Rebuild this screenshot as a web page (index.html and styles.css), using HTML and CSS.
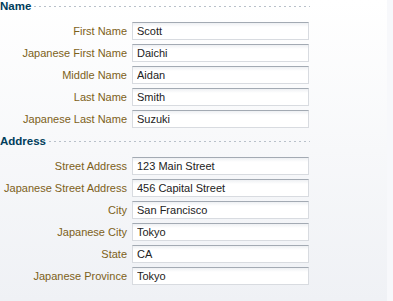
FILE: index.html
```html
<!DOCTYPE html>
<html lang="en">
<head>
	<meta charset="UTF-8">
	<title>Person Form</title>
	<link rel="stylesheet" href="styles.css">
</head>
<body>
<div class="panel">
	<div class="section">
		<h2 class="hdr"><span>Name</span></h2>
		<div class="rows">
			<div class="row"><label>First Name</label><input type="text" value="Scott"></div>
			<div class="row"><label>Japanese First Name</label><input type="text" value="Daichi"></div>
			<div class="row"><label>Middle Name</label><input type="text" value="Aidan"></div>
			<div class="row"><label>Last Name</label><input type="text" value="Smith"></div>
			<div class="row"><label>Japanese Last Name</label><input type="text" value="Suzuki"></div>
		</div>
	</div>
	<div class="section">
		<h2 class="hdr"><span>Address</span></h2>
		<div class="rows">
			<div class="row"><label>Street Address</label><input type="text" value="123 Main Street"></div>
			<div class="row"><label>Japanese Street Address</label><input type="text" value="456 Capital Street"></div>
			<div class="row"><label>City</label><input type="text" value="San Francisco"></div>
			<div class="row"><label>Japanese City</label><input type="text" value="Tokyo"></div>
			<div class="row"><label>State</label><input type="text" value="CA"></div>
			<div class="row"><label>Japanese Province</label><input type="text" value="Tokyo"></div>
		</div>
	</div>
</div>
</body>
</html>
```

FILE: styles.css
```css
html, body {
  margin: 0;
  height: 100%;
}
body {
  background: #f7f8fb;
  font-family: "Liberation Sans", Arial, sans-serif;
  font-size: 11px;
}
.panel {
  width: 387px;
  height: 301px;
  background: linear-gradient(#ffffff, #eff1f5);
  box-sizing: border-box;
}
.section {
  margin-bottom: 7px;
}
.hdr {
  display: flex;
  align-items: center;
  gap: 3px;
  width: 310px;
  height: 12px;
  margin: 0 0 10px 0;
  font-size: 11.5px;
  font-weight: bold;
  line-height: 12px;
  color: #003d5b;
}
.hdr::after {
  content: "";
  flex: 1;
  height: 1px;
  background: repeating-linear-gradient(90deg, #b9c1ca 0 2px, transparent 2px 5px);
}
.rows {
  display: flex;
  flex-direction: column;
  gap: 4px;
}
.row {
  display: flex;
  align-items: center;
  gap: 5px;
  height: 18px;
}
.row label {
  width: 127px;
  text-align: right;
  color: #7d6119;
  white-space: nowrap;
}
.row input {
  width: 177px;
  height: 18px;
  box-sizing: border-box;
  margin: 0;
  padding: 0 4px;
  border: 1px solid #d8dbe0;
  border-top-color: #a3aab3;
  background: linear-gradient(#eef0f3, #ffffff 4px);
  font-family: "Liberation Sans", Arial, sans-serif;
  font-size: 11px;
  color: #222;
  outline: none;
}
```
